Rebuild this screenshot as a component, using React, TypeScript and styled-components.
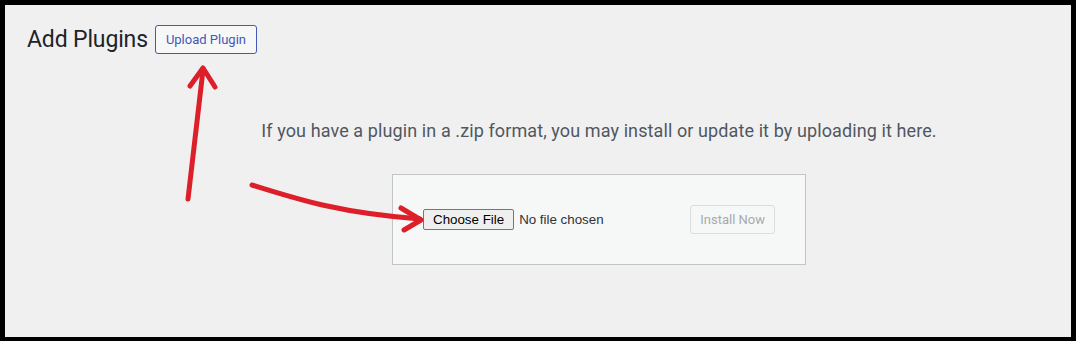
import React from 'react';
import styled, { createGlobalStyle } from 'styled-components';

const GlobalStyle = createGlobalStyle`
  html,
  body {
    margin: 0;
    padding: 0;
    background: #ffffff;
  }
  * {
    box-sizing: border-box;
  }
`;

const Frame = styled.div`
  position: relative;
  width: 1076px;
  height: 341px;
  border-style: solid;
  border-color: #000000;
  border-width: 5px 5px 4px 5px;
  background: #f0f0f1;
  padding: 20px 0 0 22px;
  font-family: Roboto, 'Noto Sans', sans-serif;
  overflow: hidden;
`;

const Header = styled.div`
  display: flex;
  align-items: center;
  gap: 7px;
  height: 29px;
`;

const Title = styled.h1`
  margin: 0;
  font-size: 23px;
  font-weight: 400;
  line-height: 29px;
  letter-spacing: -0.15px;
  color: #1d2327;
`;

const OutlineButton = styled.button`
  height: 29px;
  padding: 0 10px;
  border: 1px solid #4458b8;
  border-radius: 3px;
  background: #f6f7f7;
  color: #4458b8;
  font-family: inherit;
  font-size: 13px;
  line-height: 27px;
  cursor: pointer;
`;

const UploadSection = styled.div`
  display: flex;
  flex-direction: column;
  align-items: center;
  width: 700px;
  margin-left: 222px;
`;

const Help = styled.p`
  margin: 0;
  padding-top: 63px;
  font-size: 18px;
  line-height: 27px;
  letter-spacing: 0.1px;
  color: #50575e;
  white-space: nowrap;
`;

const UploadForm = styled.form`
  display: flex;
  align-items: center;
  justify-content: space-between;
  width: 414px;
  margin-top: 30px;
  padding: 30px;
  border: 1px solid #c3c4c7;
  background: #f6f7f7;
`;

const FileField = styled.label`
  display: flex;
  align-items: center;
  gap: 5px;
  font-family: 'Liberation Sans', Arial, sans-serif;
  font-size: 13.33px;
  color: #2c3338;
`;

const FileButton = styled.span`
  display: inline-flex;
  align-items: center;
  height: 21px;
  padding: 0 9px;
  border: 1px solid #767676;
  border-radius: 2px;
  background: #efefef;
  color: #000000;
`;

const DisabledButton = styled.button`
  height: 29px;
  padding: 0 9px;
  border: 1px solid #dcdcde;
  border-radius: 3px;
  background: #f6f7f7;
  color: #a7aaad;
  font-family: inherit;
  font-size: 13px;
  line-height: 27px;
`;

const Annotations = styled.svg`
  position: absolute;
  left: -5px;
  top: -5px;
  width: 1076px;
  height: 341px;
  pointer-events: none;
`;

const Stroke = styled.path`
  fill: none;
  stroke: #dd1f2a;
  stroke-width: 5;
  stroke-linecap: round;
  stroke-linejoin: round;
`;

export default function App() {
  return (
    <>
      <GlobalStyle />
      <Frame>
        <Header>
          <Title>Add Plugins</Title>
          <OutlineButton type="button">Upload Plugin</OutlineButton>
        </Header>
        <UploadSection>
          <Help>
            If you have a plugin in a .zip format, you may install or update it by uploading it here.
          </Help>
          <UploadForm onSubmit={(e) => e.preventDefault()}>
            <FileField>
              <FileButton>Choose File</FileButton>
              <span>No file chosen</span>
            </FileField>
            <DisabledButton type="submit" disabled>
              Install Now
            </DisabledButton>
          </UploadForm>
        </UploadSection>
        <Annotations viewBox="0 0 1076 341">
          <Stroke d="M188 199 L203 70" />
          <Stroke d="M190 86 L203 68 L215 87" />
          <Stroke d="M252 185 C 300 200, 340 213, 420 219" />
          <Stroke d="M401 208 L421 220 L404 230" />
        </Annotations>
      </Frame>
    </>
  );
}
